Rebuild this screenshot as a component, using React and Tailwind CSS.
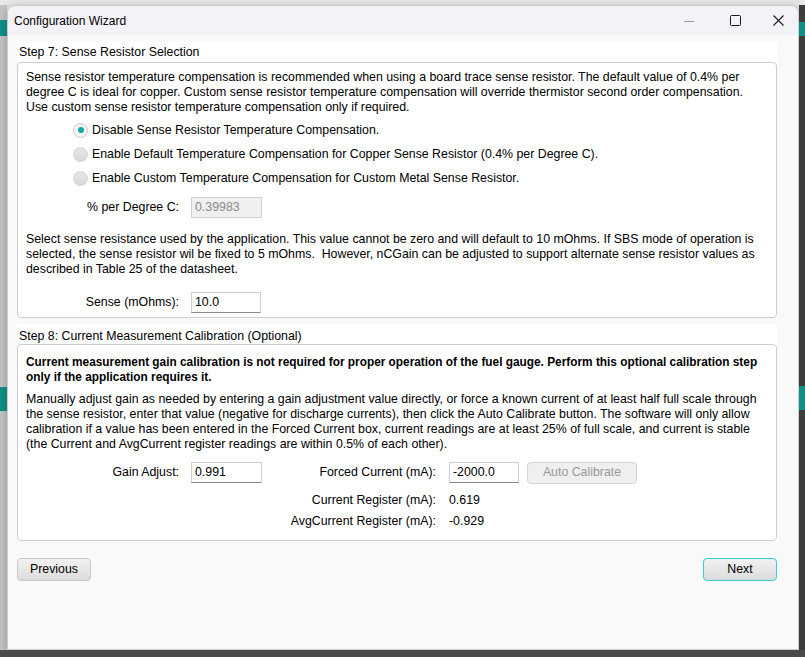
import React from 'react';

function Radio({ checked, children }) {
  return (
    <div className="flex items-center h-[24px] ml-[47px]">
      {checked ? (
        <span className="w-[15px] h-[15px] rounded-full border border-[#c9c9c9] bg-[#f4f4f4] flex items-center justify-center">
          <span className="w-[6px] h-[6px] rounded-full bg-[#13a8a4]" />
        </span>
      ) : (
        <span className="w-[15px] h-[15px] rounded-full border border-[#d6d6d6] bg-gradient-to-b from-[#e6e6e6] to-[#d9d9d9]" />
      )}
      <span className="ml-[4px]">{children}</span>
    </div>
  );
}

function Field({ value, disabled, w = 'w-[71px]' }) {
  return (
    <div
      className={`${w} h-[21px] flex items-center pl-[3px] border border-[#cfcfcf] ${
        disabled ? 'bg-[#f0f0f0] text-[#8a8a8a]' : 'bg-white border-b-[#8a8a8a] text-black'
      }`}
    >
      {value}
    </div>
  );
}

function WinButton({ children, accent }) {
  return (
    <button
      className={`w-[74px] h-[23px] rounded-[4px] border bg-gradient-to-b from-[#f2f2f2] to-[#dcdcdc] text-[12.35px] ${
        accent ? 'border-[#33d1d1]' : 'border-[#c8c8c8]'
      }`}
    >
      {children}
    </button>
  );
}

export default function App() {
  return (
    <div className="w-[805px] h-[657px] overflow-hidden bg-[#e6e6e6] flex flex-col font-['Liberation_Sans',Arial,sans-serif] text-[12.35px] text-black">
      <div className="h-[5px] bg-[#e8e8e8]" />
      <div className="flex h-[645px]">
        {/* desktop strip on the left */}
        <div className="w-[7px] flex flex-col bg-[#c4c4c4]">
          <div className="h-[15px]" />
          <div className="h-[16px] bg-[#0e9088]" />
          <div className="h-[351px]" />
          <div className="h-[24px] bg-[#0e9088]" />
        </div>

        {/* dialog window */}
        <div className="w-[792px] flex flex-col rounded-t-[8px] bg-[#f9f9f9] border border-[#cdcdcd] shadow-[0_2px_10px_rgba(0,0,0,0.25)]">
          {/* title bar */}
          <div className="h-[29px] flex items-center bg-[#f3f2f7] rounded-t-[8px] pl-[6px] text-[12px]">
            <span>Configuration Wizard</span>
            <div className="ml-auto flex items-center">
              <div className="w-[46px] flex justify-center">
                <svg width="10" height="10" viewBox="0 0 10 10">
                  <path d="M0 5.5h10" stroke="#9a9a9a" strokeWidth="1" />
                </svg>
              </div>
              <div className="w-[46px] flex justify-center">
                <svg width="11" height="11" viewBox="0 0 11 11">
                  <rect x="0.5" y="0.5" width="10" height="10" rx="1" fill="none" stroke="#1a1a1a" strokeWidth="1" />
                </svg>
              </div>
              <div className="w-[40px] flex justify-center">
                <svg width="11" height="11" viewBox="0 0 11 11">
                  <path d="M0.5 0.5L10.5 10.5M10.5 0.5L0.5 10.5" stroke="#1a1a1a" strokeWidth="1.1" />
                </svg>
              </div>
            </div>
          </div>

          {/* body */}
          <div className="flex-1 px-[9px] pt-[6px]">
            <div className="w-[760px]">
              {/* Step 7 */}
              <div className="bg-white">
                <div className="h-[21px] pt-[4px] leading-[15px] pl-[2px]">Step 7: Sense Resistor Selection</div>
                <div className="border border-[#cdcdcd] rounded-[4px] bg-white px-[8px] pt-[7px] pb-[4px]">
                  <p className="leading-[15px] whitespace-nowrap">
                    Sense resistor temperature compensation is recommended when using a board trace sense resistor. The default value of 0.4% per
                    <br />
                    degree C is ideal for copper. Custom sense resistor temperature compensation will override thermistor second order compensation.
                    <br />
                    Use custom sense resistor temperature compensation only if required.
                  </p>
                  <div className="mt-[3px]">
                    <Radio checked>Disable Sense Resistor Temperature Compensation.</Radio>
                    <Radio>Enable Default Temperature Compensation for Copper Sense Resistor (0.4% per Degree C).</Radio>
                    <Radio>Enable Custom Temperature Compensation for Custom Metal Sense Resistor.</Radio>
                  </div>
                  <div className="mt-[7px] flex items-center h-[21px]">
                    <span className="w-[153px] text-right">% per Degree C:</span>
                    <div className="ml-[12px]">
                      <Field value="0.39983" disabled />
                    </div>
                  </div>
                  <p className="mt-[14px] leading-[15px] whitespace-nowrap">
                    Select sense resistance used by the application. This value cannot be zero and will default to 10 mOhms. If SBS mode of operation is
                    <br />
                    selected, the sense resistor wil be fixed to 5 mOhms.&nbsp; However, nCGain can be adjusted to support alternate sense resistor values as
                    <br />
                    described in Table 25 of the datasheet.
                  </p>
                  <div className="mt-[15px] flex items-center h-[21px]">
                    <span className="w-[153px] text-right">Sense (mOhms):</span>
                    <div className="ml-[12px]">
                      <Field value="10.0" w="w-[70px]" />
                    </div>
                  </div>
                </div>
              </div>

              {/* Step 8 */}
              <div className="bg-white mt-[6px]">
                <div className="h-[20px] pt-[5px] leading-[15px] pl-[2px]">Step 8: Current Measurement Calibration (Optional)</div>
                <div className="border border-[#cdcdcd] rounded-[4px] bg-white px-[8px] pt-[10px] pb-[9px]">
                  <p className="leading-[15px] font-bold text-[11.85px] whitespace-nowrap">
                    Current measurement gain calibration is not required for proper operation of the fuel gauge. Perform this optional calibration step
                    <br />
                    only if the application requires it.
                  </p>
                  <p className="mt-[7px] leading-[15px] whitespace-nowrap">
                    Manually adjust gain as needed by entering a gain adjustment value directly, or force a known current of at least half full scale through
                    <br />
                    the sense resistor, enter that value (negative for discharge currents), then click the Auto Calibrate button. The software will only allow
                    <br />
                    calibration if a value has been entered in the Forced Current box, current readings are at least 25% of full scale, and current is stable
                    <br />
                    (the Current and AvgCurrent register readings are within 0.5% of each other).
                  </p>
                  <div className="mt-[10px] flex items-center h-[21px]">
                    <span className="w-[153px] text-right">Gain Adjust:</span>
                    <div className="ml-[12px]">
                      <Field value="0.991" />
                    </div>
                    <span className="w-[174px] text-right">Forced Current (mA):</span>
                    <div className="ml-[13px]">
                      <Field value="-2000.0" w="w-[70px]" />
                    </div>
                    <button className="ml-[8px] w-[110px] h-[22px] rounded-[4px] border border-[#d4d4d4] bg-[#efefef] text-[#9a9a9a] text-[12.35px]">
                      Auto Calibrate
                    </button>
                  </div>
                  <div className="mt-[7px] flex items-center h-[21px]">
                    <span className="w-[410px] text-right">Current Register (mA):</span>
                    <span className="ml-[13px]">0.619</span>
                  </div>
                  <div className="flex items-center h-[20px]">
                    <span className="w-[410px] text-right">AvgCurrent Register (mA):</span>
                    <span className="ml-[13px]">-0.929</span>
                  </div>
                </div>
              </div>

              {/* navigation */}
              <div className="mt-[17px] flex justify-between">
                <WinButton>Previous</WinButton>
                <WinButton accent>Next</WinButton>
              </div>
            </div>
          </div>
        </div>

        {/* desktop strip on the right */}
        <div className="flex-1 flex flex-col bg-[#3d3d3d]">
          <div className="h-[17px]" />
          <div className="h-[14px] bg-[#0e9088]" />
          <div className="h-[350px]" />
          <div className="h-[24px] bg-[#0e9088]" />
        </div>
      </div>
      <div className="flex-1 bg-[#4a4a4a]" />
    </div>
  );
}
